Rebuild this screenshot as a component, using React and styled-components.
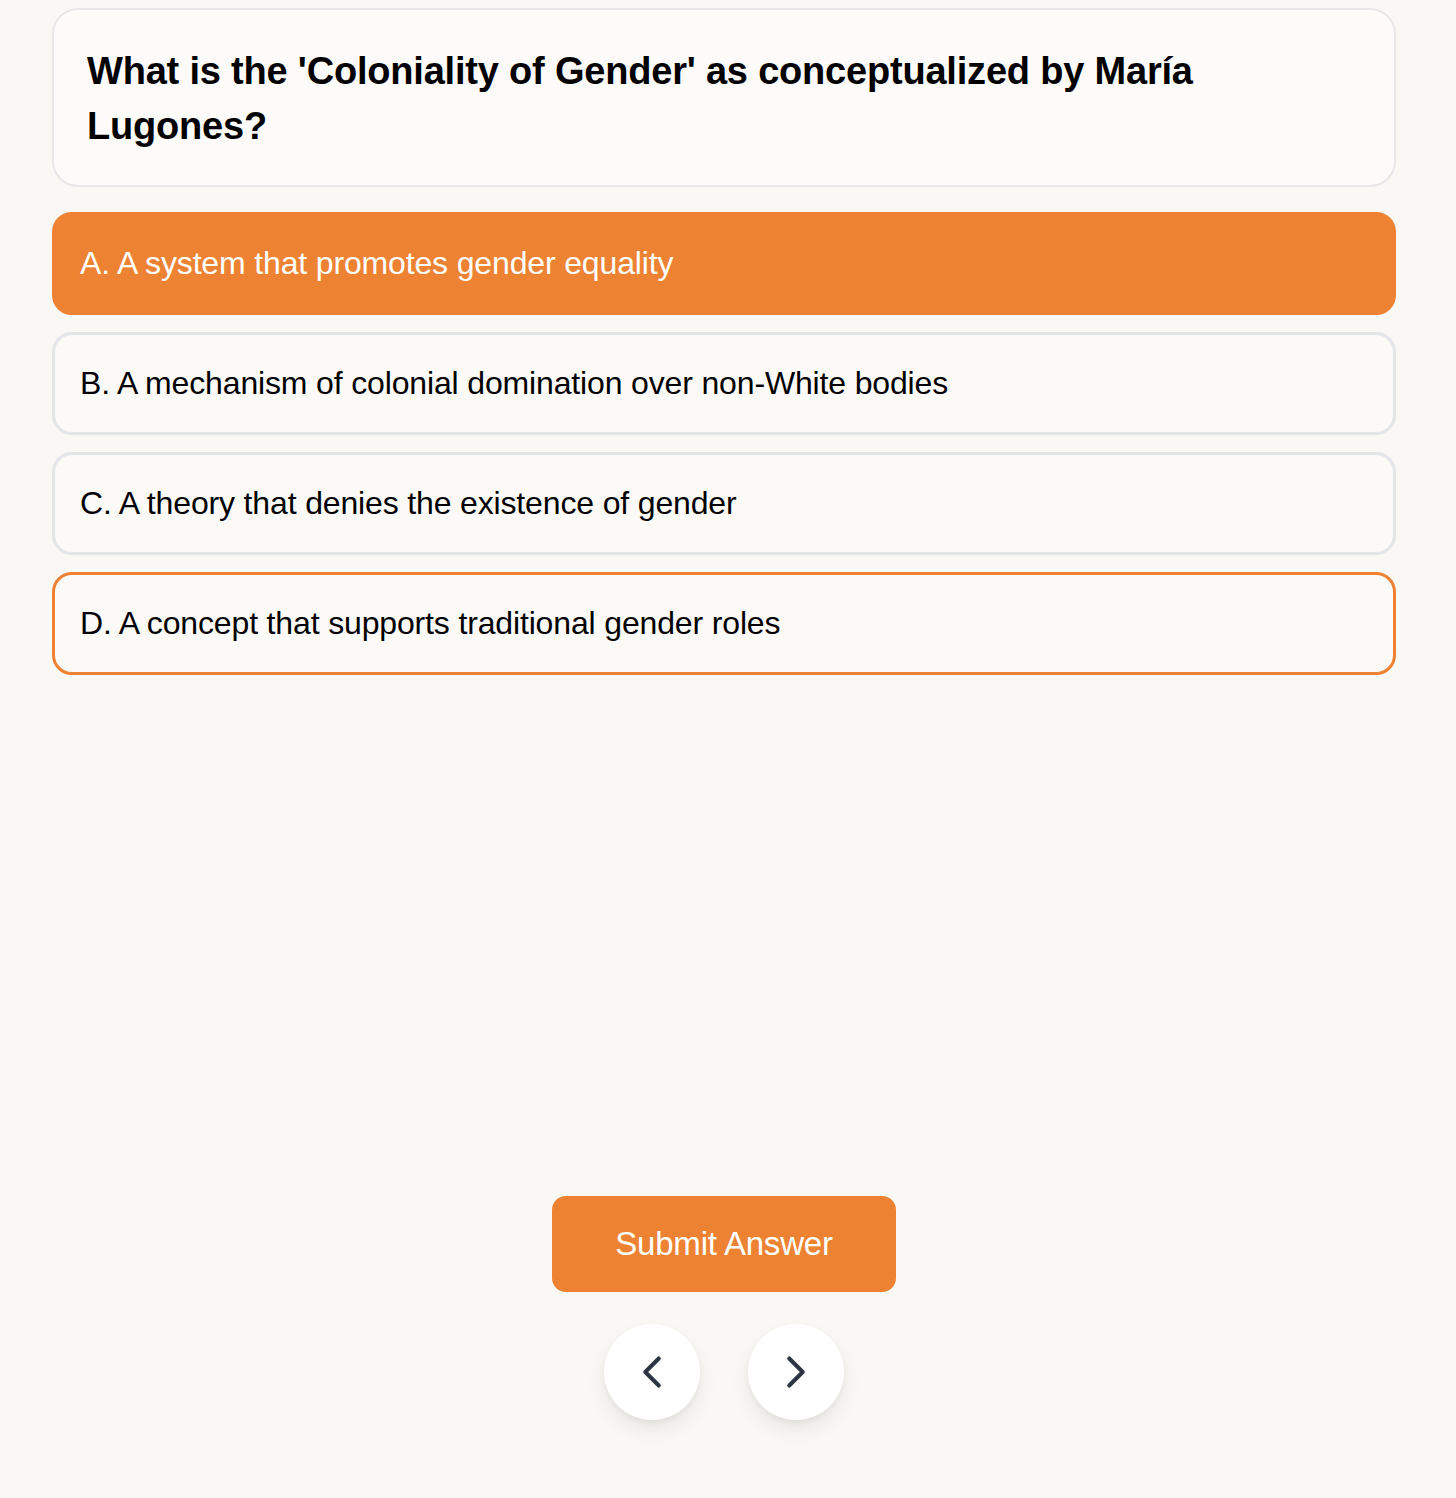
import styled, { createGlobalStyle } from 'styled-components';

const GlobalStyle = createGlobalStyle`
  html, body {
    margin: 0;
    padding: 0;
    background: #f9f8f5;
  }
  body {
    font-family: "Liberation Sans", Arial, sans-serif;
    color: #0a0a0a;
  }
`;

const Page = styled.div`
  display: flex;
  flex-direction: column;
  min-height: 1498px;
  box-sizing: border-box;
  padding: 8px 60px 78px 52px;
`;

const QuestionCard = styled.div`
  background: #fcfbf9;
  border: 2px solid #e7e7e9;
  border-radius: 26px;
  padding: 34px 33px 31px;
`;

const QuestionText = styled.h1`
  margin: 0;
  max-width: 1180px;
  font-size: 38px;
  line-height: 55px;
  font-weight: 700;
  letter-spacing: -0.2px;
  color: #000;
`;

const Options = styled.div`
  display: flex;
  flex-direction: column;
  gap: 17px;
  margin-top: 25px;
`;

const Option = styled.button`
  display: flex;
  align-items: center;
  height: 103px;
  box-sizing: border-box;
  padding: 0 25px;
  border-radius: 20px;
  font-family: inherit;
  font-size: 32px;
  letter-spacing: -0.15px;
  text-align: left;
  cursor: pointer;
  background: ${p => (p.$selected ? '#ee8233' : '#fbfaf7')};
  color: ${p => (p.$selected ? '#fff' : '#000')};
  border: 3px solid
    ${p => (p.$selected || p.$focused ? '#ee8233' : '#e4e5e9')};
`;

const Footer = styled.div`
  margin-top: auto;
  display: flex;
  flex-direction: column;
  align-items: center;
  gap: 32px;
`;

const SubmitButton = styled.button`
  width: 344px;
  height: 96px;
  border: none;
  border-radius: 14px;
  background: #ee8233;
  color: #fff;
  font-family: inherit;
  font-size: 33px;
  letter-spacing: -0.2px;
  cursor: pointer;
`;

const NavRow = styled.div`
  display: flex;
  gap: 48px;
`;

const NavButton = styled.button`
  width: 96px;
  height: 96px;
  border-radius: 50%;
  border: none;
  background: #fff;
  display: flex;
  align-items: center;
  justify-content: center;
  box-shadow: 0 10px 20px rgba(0, 0, 0, 0.07), 0 3px 6px rgba(0, 0, 0, 0.04);
  cursor: pointer;
  color: #2d3443;
`;

const Chevron = ({ dir }) => (
  <svg width="54" height="54" viewBox="0 0 24 24" fill="none" stroke="currentColor"
    strokeWidth="1.8" strokeLinecap="round" strokeLinejoin="round">
    {dir === 'left' ? <path d="M15 18l-6-6 6-6" /> : <path d="M9 18l6-6-6-6" />}
  </svg>
);

const options = [
  { label: 'A. A system that promotes gender equality', selected: true },
  { label: 'B. A mechanism of colonial domination over non-White bodies' },
  { label: 'C. A theory that denies the existence of gender' },
  { label: 'D. A concept that supports traditional gender roles', focused: true },
];

const App = () => (
  <>
    <GlobalStyle />
    <Page>
      <QuestionCard>
        <QuestionText>
          What is the 'Coloniality of Gender' as conceptualized by María Lugones?
        </QuestionText>
      </QuestionCard>
      <Options>
        {options.map(o => (
          <Option key={o.label} $selected={o.selected} $focused={o.focused}>
            {o.label}
          </Option>
        ))}
      </Options>
      <Footer>
        <SubmitButton>Submit Answer</SubmitButton>
        <NavRow>
          <NavButton aria-label="Previous"><Chevron dir="left" /></NavButton>
          <NavButton aria-label="Next"><Chevron dir="right" /></NavButton>
        </NavRow>
      </Footer>
    </Page>
  </>
);

export default App;
